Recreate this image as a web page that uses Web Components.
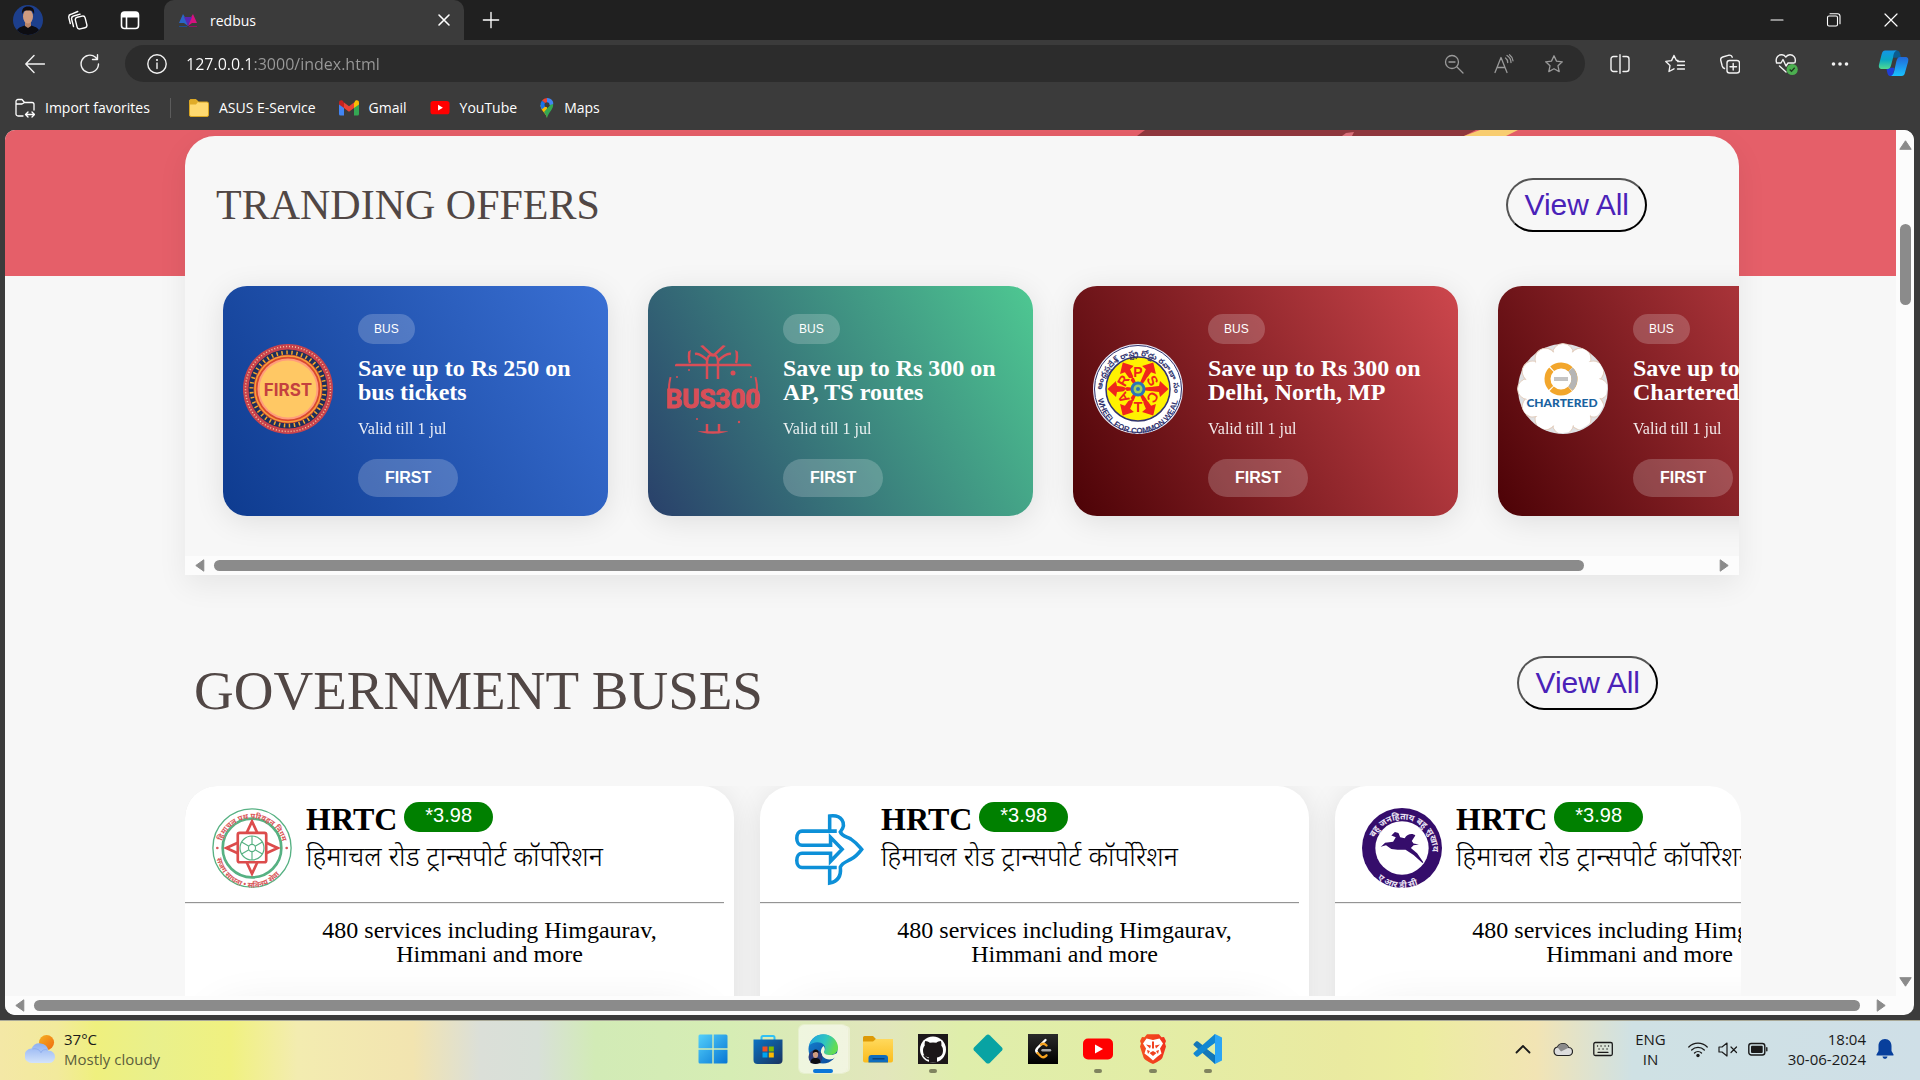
<!DOCTYPE html>
<html lang="en">
<head>
<meta charset="utf-8">
<title>redbus</title>
<style>
html,body{height:100%;margin:0}
body{overflow:hidden;background:#3b3b3b;font-family:"Liberation Serif",serif}
</style>
</head>
<body>
<desktop-screen></desktop-screen>
<script>
const define = (name, html, setup) => {
  const t = document.createElement('template');
  t.innerHTML = html;
  customElements.define(name, class extends HTMLElement {
    constructor() {
      super();
      this.attachShadow({mode: 'open'}).append(t.content.cloneNode(true));
    }
    connectedCallback() { if (setup) setup(this, this.shadowRoot); }
  });
};

/* ---------- line icons and app icons ---------- */
const line = (d, w = 1.4) => `<g fill="none" stroke="currentColor" stroke-width="${w}" stroke-linecap="round" stroke-linejoin="round">${d}</g>`;
const star = 'M10 1.8l2.5 5.3 5.8.7-4.3 4 1.2 5.8L10 14.700l-5.200 2.900 1.200-5.800-4.300-4 5.800-.7z';
const ICONS = {
  avatar: ['0 0 30 30', `<defs><clipPath id="c"><circle cx="15" cy="15" r="15"/></clipPath></defs><g clip-path="url(#c)"><rect width="30" height="30" fill="#1d3f8c"/><path d="M3 30c0-7 4-8 9-9.500h6c5 1.500 9 2.500 9 9.500z" fill="#0d0d12"/><path d="M12 17h6v4l-3 2-3-2z" fill="#b98569"/><ellipse cx="15" cy="11.500" rx="5" ry="7" fill="#cf9b80"/><path d="M9 9.500c-.5-6 2-8 6-8s7 2 6 8c-1-3-2-4-3-4h-5c-2 0-3 1-4 4z" fill="#120d0e"/></g>`],
  spaces: ['0 0 20 20', line('<rect x="8" y="6.500" width="10" height="12" rx="2.500" transform="rotate(-14 13 12)"/><path d="M5.500 16.500L3.700 9.500c-.4-1.700.4-3.100 1.900-3.500l6.500-1.900M2.300 13.500L.9 8c-.4-1.700.4-3.300 2-3.700L9.800 1.500"/>')],
  tabs: ['0 0 20 20', line('<rect x="1.500" y="2" width="17" height="16.500" rx="3"/><path d="M6.500 7v11"/>', 1.6) + '<path d="M1.500 7.500V5a3 3 0 013-3h11a3 3 0 013 3v2.500z" fill="currentColor"/>'],
  fav: ['0 0 20 16', '<path d="M1 11L5 2l3 5 2 7-4-3z" fill="#2a66c8"/><path d="M19 11l-4-9-3 5-2 7 4-3z" fill="#d6117f"/><path d="M6 5h8l-4 9z" fill="#5a26b0"/><path d="M1 14.500h8" stroke="#1e4c8e"/><path d="M11 14.500h8" stroke="#8d1462"/>'],
  x: ['0 0 20 20', line('<path d="M5 5l10 10M15 5L5 15"/>', 1.6)],
  close: ['0 0 20 20', line('<path d="M4 4l12 12M16 4L4 16"/>', 1.2)],
  plus: ['0 0 20 20', line('<path d="M10 1.500v17M1.500 10h17"/>', 1.5)],
  min: ['0 0 20 20', line('<path d="M4 10h12"/>', 1.1)],
  restore: ['0 0 20 20', line('<rect x="3.500" y="6" width="10" height="10" rx="1.500"/><path d="M6 3.700h7.500a2.500 2.500 0 012.500 2.500v7.500"/>', 1.1)],
  back: ['0 0 20 20', line('<path d="M19.500 10H.8M9 1.500L.8 10 9 18.500"/>')],
  reload: ['0 0 20 20', line('<path d="M18.500 10a8.700 8.700 0 11-3-6.700L17 5M17.500.8V5.500h-5"/>')],
  info: ['0 0 20 20', line('<circle cx="10" cy="10" r="9.200"/><path d="M10 9v5.500"/>') + '<circle cx="10" cy="6" r="1.100" fill="currentColor"/>'],
  zoomout: ['0 0 20 20', line('<circle cx="8" cy="8" r="6.500"/><path d="M13 13l6 6M5 8h6"/>', 1.3)],
  read: ['0 0 20 20', line('<path d="M1 18.500L7 3.500l6 15M3.200 13.500h7.700M11.500 4c1.500 1 2.200 2.700 2.200 4.500M13 1.500c2.500 1.500 4 4 4 7M15.500.8c2.200 1.700 3.300 3.500 3.500 6"/>', 1.3)],
  star: ['0 0 20 20', line(`<path d="${star}"/>`, 1.3)],
  split: ['0 0 20 20', line('<path d="M10 .8v18.400M7 2.500H3.500a2.500 2.500 0 00-2.500 2.500v10a2.500 2.500 0 002.500 2.500H7M13 2.500h3.500A2.500 2.500 0 0119 5v10a2.500 2.500 0 01-2.500 2.500H13"/>')],
  favs: ['0 0 20 20', line('<path d="M13 6.500l-1.700-.2L9 1.500 6.500 6.600.8 7.400 5 11.500 4 17.500l5-2.700M12.500 7.500h7M12.500 11.300h7M12.500 15h7"/>')],
  coll: ['0 0 20 20', line('<rect x="7" y="6.500" width="12.500" height="12.500" rx="2.500"/><path d="M13.200 9.500v6.500M10 12.700h6.500M4.500 14.500C3 14 2.500 13 2.200 12L.8 6.500C.4 4.800 1 3.500 2.700 3L9 1.200c1.700-.4 2.800.3 3.300 2"/>')],
  heart: ['0 0 23 23', line('<path d="M1.500 9.500C0 4 4 1.500 7 1.800c2 .2 3.200 1.300 3.800 2.300C11.500 3 13 2 14.800 1.800c3-.2 6.700 2.500 5.200 7.700M1.500 10H6l2-3.500 3 6.500 2-3h6M4.500 13l6.500 6"/>') + '<circle cx="17.200" cy="16.500" r="5.600" fill="#4caf50"/><path d="M14.700 16.500l1.800 1.800 3.200-3.600" fill="none" stroke="#1f3b20" stroke-width="1.300"/>'],
  dots: ['0 0 20 20', '<g fill="currentColor"><circle cx="3.500" cy="10" r="1.800"/><circle cx="10" cy="10" r="1.800"/><circle cx="16.500" cy="10" r="1.800"/></g>'],
  copilot: ['0 0 32 30', '<defs><linearGradient id="a" x1="0" y1="0" x2="0" y2="1"><stop offset="0" stop-color="#1496e8"/><stop offset=".5" stop-color="#0aa7c4"/><stop offset="1" stop-color="#52dc8e"/></linearGradient><linearGradient id="b" x1="0" y1="0" x2="0" y2="1"><stop offset="0" stop-color="#2167d8"/><stop offset="1" stop-color="#19c2ff"/></linearGradient></defs><path d="M16 1.500h3.500c2 0 3 1.500 3.500 4l.7 3.500H15z" fill="#0b5c8f"/><path d="M15.500 28h-2c-2.500 0-3.500-1-4-4L8.500 19.500H17z" fill="#1f3ed6"/><path d="M7.500 1.500H19.500C16.500 2.500 16.200 5 15.500 9L13.700 16c-.8 3-1.700 4.800-4.200 4.800H4.300c-3 0-4-2-3.200-5L3.600 6C4.400 2.800 5.300 1.500 7.500 1.500z" fill="url(#a)"/><path d="M24 28H13.500c2.200-1 2.800-3.500 3.400-6l2-9c.7-3 1.600-4.800 4.100-4.800h5c3 0 3.900 2 3.100 5L28.300 23c-.8 3.500-1.500 5-4.300 5z" fill="url(#b)"/>'],
  import: ['0 0 20 20', line('<path d="M8 18H3a2 2 0 01-2-2V3.500a2 2 0 012-2h4l2.500 3H17a2 2 0 012 2V12M1 6h6l2.500-1.500"/><path d="M11 16.500h8M13 14l-2.500 2.500L13 19M17 14l2.500 2.500L17 19"/>', 1.3)],
  folder: ['0 0 20 20', '<path d="M.5 3A1.500 1.500 0 012 1.500h5L9.500 4H18a1.500 1.500 0 011.500 1.500V17A1.500 1.500 0 0118 18.500H2A1.500 1.500 0 01.5 17z" fill="#ffd970" stroke="#d9a520"/><path d="M.5 3A1.500 1.500 0 012 1.500h5L9 4 7 6.500H.5z" fill="#e0ab28"/>'],
  gmail: ['0 0 20 16', '<path d="M0 3v11a1.500 1.500 0 001.500 1.500H5V7z" fill="#4285f4"/><path d="M20 3v11a1.500 1.500 0 01-1.500 1.500H15V7z" fill="#34a853"/><path d="M15 3v5l5-3.500V2.500c0-2-2.200-2.800-3.700-1.700z" fill="#fbbc04"/><path d="M5 8V2.500l5 3.800 5-3.800V8l-5 3.800z" fill="#ea4335"/><path d="M0 2.500v2L5 8V2.500L3.700.8C2.200-.3 0 .5 0 2.500z" fill="#c5221f"/>'],
  yt: ['0 0 30 22', '<rect width="30" height="21" rx="4.500" fill="#f00"/><path d="M12 6l7.500 4.500L12 15z" fill="#fff"/>'],
  pin: ['0 0 14 20', '<path d="M7 20c0-4-6.500-7-6.500-13H7z" fill="#fbbc04"/><path d="M7 0a6.700 6.700 0 00-5 2.500L7 7z" fill="#ea4335"/><path d="M2 2.500A7 7 0 00.5 8c.3 1.500 1 2.500 1.500 3.300L7 7z" fill="#1a73e8"/><path d="M7 0c5 0 7 4 6 7L7 7z" fill="#4285f4"/><path d="M13 6c1 5-4.500 8-6 14-.5-2-1.500-4-3-6l6-7z" fill="#34a853"/><circle cx="7" cy="6.700" r="2.500" fill="#3b3b3b"/>'],
  weather: ['0 0 32 32', '<defs><linearGradient id="s" x1="0" y1="0" x2="1" y2="1"><stop stop-color="#f5b021"/><stop offset="1" stop-color="#ef6a10"/></linearGradient><linearGradient id="w" x1="0" y1="0" x2="0" y2="1"><stop stop-color="#8eb0f2"/><stop offset="1" stop-color="#d3e3fb"/></linearGradient></defs><circle cx="23" cy="9" r="8" fill="url(#s)"/><path d="M7.500 31A7.500 7.500 0 017 15.500 9.500 9.500 0 0125 18a6.500 6.500 0 011 13z" fill="url(#w)"/><path d="M8 16c4-1 8 1 9 4 1-3 4-4 7-3" fill="none" stroke="#7d9fe8" opacity=".6"/>'],
  start: ['0 0 30 30', '<defs><linearGradient id="g" x1="0" y1="0" x2="1" y2="1"><stop stop-color="#54d0fb"/><stop offset="1" stop-color="#0676d4"/></linearGradient></defs><path d="M.5 2A1.500 1.500 0 012 .5h12.300v13.800H.5zM15.700.5H28A1.500 1.500 0 0129.500 2v12.300H15.700zM.5 15.700h13.800v13.800H2A1.500 1.500 0 01.5 28zM15.700 15.700h13.800V28a1.500 1.500 0 01-1.500 1.500H15.700z" fill="url(#g)"/>'],
  store: ['0 0 30 30', '<defs><linearGradient id="g" x1="0" y1="0" x2="1" y2="1"><stop stop-color="#0a74c4"/><stop offset="1" stop-color="#1a335e"/></linearGradient></defs><path d="M8.500 7V3.500a1.500 1.500 0 011.500-1.500h10a1.500 1.500 0 011.500 1.500V7" fill="none" stroke="#30c0f4" stroke-width="2"/><path d="M.5 5.500h29V26a4 4 0 01-4 4h-21a4 4 0 01-4-4z" fill="url(#g)"/><path d="M9.500 12.500h5v5h-5z" fill="#f25022"/><path d="M15.800 12.500h5v5h-5z" fill="#7fba00"/><path d="M9.500 18.500h5v5h-5z" fill="#00a4ef"/><path d="M15.800 18.500h5v5h-5z" fill="#ffb900"/>'],
  edge: ['0 0 30 30', '<defs><linearGradient id="g" x1="0" y1="0" x2="1" y2=".3"><stop stop-color="#1fa0e4"/><stop offset=".6" stop-color="#2fc6c0"/><stop offset="1" stop-color="#62dc52"/></linearGradient><linearGradient id="h" x1="0" y1="0" x2="1" y2="1"><stop stop-color="#1482d2"/><stop offset="1" stop-color="#0c4796"/></linearGradient></defs><circle cx="15" cy="15" r="14.500" fill="url(#h)"/><path d="M1 12C3 4 9 .3 15.500.3 24 .3 30 7 30 13.500c0 5-4 7.500-8 7.500-5 0-6.500-2-6-3 1.500-2 2-5-.5-7.500C12 7 4 8 1 12z" fill="url(#g)"/><path d="M15.700 12c-3 2-4 7-1 10.500 3.500 4 9.500 3.500 12.500 1 1-.7 1.500.2 1 .8l2-1V18c-2 2-5 3-8 3-4 0-6.500-1.500-6.200-3 1.200-2 1-4-.3-6z" fill="#f0f6dc"/><circle cx="7.500" cy="23" r="7" fill="#2b3a7c"/><path d="M2.500 29c0-4 2-5 5-5s5 1 5 5l-5 1z" fill="#0d0d12"/><ellipse cx="7.500" cy="20.500" rx="2.600" ry="3.500" fill="#cf9b80"/><path d="M4.700 19.500c0-3 1-4 3-4s3 1 2.800 4c-1-2-4-2-5.800 0z" fill="#120d0e"/>'],
  files: ['0 0 30 30', '<defs><linearGradient id="g" x1="0" y1="0" x2="0" y2="1"><stop stop-color="#ffd95c"/><stop offset="1" stop-color="#fbbc1d"/></linearGradient></defs><path d="M0 3.500A1.500 1.500 0 011.500 2H10l3 3-2 4H0z" fill="#dd9a06"/><path d="M0 7.500h10L13 5h17v21.500a2 2 0 01-2 2H2a2 2 0 01-2-2z" fill="url(#g)"/><path d="M5.500 28.500V24a3 3 0 013-3h13.500a3 3 0 013 3v4.500z" fill="#0f6cbd"/><path d="M9.500 24.800h12" stroke="#083f78" stroke-width="1.400"/>'],
  github: ['0 0 30 30', '<rect width="30" height="30" fill="#1c1719"/><circle cx="15" cy="15.500" r="13" fill="#fff"/><path d="M11 28.500v-5c-3.500-.5-6-2.500-6-7 0-2 .7-3.700 1.800-5-.3-1.500-.2-3.200.5-4.500 1.700 0 3.200.8 4.500 1.800a13 13 0 016.500 0c1.300-1 2.800-1.800 4.500-1.800.7 1.300.8 3 .5 4.500a7.500 7.500 0 011.700 5c0 4.500-2.500 6.500-6 7v5z" fill="#1c1719"/><path d="M5.500 21.500c2 .5 2 3.500 5.500 3.500" fill="none" stroke="#1c1719" stroke-width="1.600"/>'],
  diamond: ['0 0 30 30', '<path d="M13 1.500a3 3 0 014 0L29 13.500a2.500 2.500 0 010 3L17 28.700a3 3 0 01-4 0L1 16.500a2.500 2.500 0 010-3z" fill="#08a3a3"/>'],
  leet: ['0 0 30 30', '<defs><linearGradient id="g" x1="0" y1="0" x2="0" y2="1"><stop stop-color="#2a2a2a"/><stop offset="1" stop-color="#000"/></linearGradient></defs><rect width="30" height="30" fill="url(#g)"/><g fill="none" stroke-width="2.400" stroke-linecap="round"><path d="M17.500 6l-8 8c-1.500 1.500-1.500 3.500 0 5" stroke="#fff"/><path d="M13 10.500c2-1.500 3.500-1 5.500 1M9.500 19l3 3c1.500 1.500 3.500 1.500 5 .3l1-1" stroke="#f6a11e"/><path d="M14.500 16.300H22" stroke="#a8a8a8"/></g>'],
  ytb: ['0 0 30 30', '<rect y="4.500" width="30" height="21" rx="5" fill="#f00"/><path d="M12 10.500l8 4.500-8 4.500z" fill="#fff"/>'],
  brave: ['0 0 30 30', '<defs><linearGradient id="g" x1="0" y1="0" x2="1" y2="0"><stop stop-color="#f4511f"/><stop offset="1" stop-color="#f0321d"/></linearGradient></defs><path d="M9 .3h12l2.500 3 2.500-.3 2 4-1 2.500 1 3-3.500 11c-.5 1.500-3 3.500-9.500 6.500-6.500-3-9-5-9.500-6.500L2 12.500l1-3L2 7l2-4 2.500.3z" fill="url(#g)"/><path d="M8.500 4.500L15 6l6.500-1.500 3.500 5-3 5 1.500 5-4 3L15 26.500 10.500 22.500l-4-3 1.500-5-3-5z" fill="#fff"/><path d="M8 10.500l5 1-1 3zM22 10.500l-5 1 1 3zM11.500 19l3.500-2 3.500 2-3.500 3zM14 7.500h2v7h-2zM9 16l3 1-2 3zM21 16l-3 1 2 3z" fill="#f0421f"/>'],
  code: ['0 0 30 30', '<path d="M22 0l7 3.500v23L22 30l-1.500-2V3z" fill="#2ba5f5"/><path d="M22 0v30L1 11.500c-.7-.6-.7-1.500 0-2.100L3 7.600c.6-.5 1.300-.5 2 0L22 21z" fill="#0871b8" opacity=".95"/><path d="M22 0v9L5 22.400c-.7.500-1.400.5-2 0l-2-1.800c-.7-.6-.7-1.500 0-2.100z" fill="#1187d2"/><path d="M22 9v12l-8-6z" fill="#dfeea8"/>'],
  up: ['0 0 20 20', line('<path d="M3.500 13.500L10 7l6.500 6.500"/>', 1.8)],
  cloud: ['0 0 20 20', '<path d="M5 16.500A4.300 4.300 0 014.500 8 6 6 0 0115.500 8.500 4 4 0 0115.500 16.500z" fill="#ddd" stroke="#222" stroke-width="1.200"/><path d="M4.500 8.200A6 6 0 0115.500 8.700L8 12.500z" fill="#8a8a8a"/>'],
  keyb: ['0 0 20 20', line('<rect x=".8" y="3.500" width="18.500" height="13" rx="1.500"/><path d="M4.500 7h.1M8 7h.1M12 7h.1M15.500 7h.1M6 10h.1M10 10h.1M14 10h.1M5 13.300h10"/>', 1.3)],
  wifi: ['0 0 20 20', line('<path d="M.8 8a13 13 0 0118.400 0M3.700 11a9 9 0 0112.600 0M6.500 14a5 5 0 017 0"/>', 1.3) + '<circle cx="10" cy="16.500" r="1.700" fill="currentColor"/>'],
  mute: ['0 0 20 20', line('<path d="M1 8v5h3l5 4V4L4 8zM13 8l5.500 5.500M18.500 8L13 13.500"/>', 1.2)],
  batt: ['0 0 20 20', line('<rect x=".8" y="4.500" width="16" height="11.500" rx="2.500"/><path d="M18.800 8.800v3"/>', 1.4) + '<rect x="3" y="6.700" width="11.700" height="7.200" rx="1" fill="currentColor"/>'],
  bell: ['0 0 20 20', '<path d="M10 0c4 0 6.500 3 6.500 7v5l2 3.500c.2.500 0 1-.5 1H2c-.5 0-.7-.5-.5-1l2-3.500V7c0-4 2.500-7 6.500-7zM7.500 17.500h5c-.3 1.500-1.300 2.300-2.500 2.300s-2.200-.8-2.500-2.300z" fill="#083f9c"/>']
};
define('ui-icon', `<style>:host{display:inline-flex;width:20px;height:20px;flex:none}svg{width:100%;height:100%;display:block}</style>`,
  (el, r) => { const [vb, body] = ICONS[el.getAttribute('name')]; r.innerHTML += `<svg viewBox="${vb}" aria-hidden="true">${body}</svg>`; });

/* ---------- round emblems ---------- */
const ring = (n, f) => Array.from({length: n}, (_, i) => f(i * 360 / n)).join('');
const EMBLEMS = {
  first: `<circle cx="45" cy="45" r="45" fill="#c9434c"/><circle cx="45" cy="45" r="42.500" fill="none" stroke="#f3c9a0" stroke-width="1.500" stroke-dasharray="1 2"/><circle cx="45" cy="45" r="39.500" fill="#1d2f5c"/><circle cx="45" cy="45" r="36.500" fill="none" stroke="#f0a52e" stroke-width="4" stroke-dasharray="1.500 3.500"/><circle cx="45" cy="45" r="34.500" fill="#d9482f"/><circle cx="45" cy="45" r="33" fill="none" stroke="#f7a13b" stroke-width="1.500"/><circle cx="45" cy="45" r="30.500" fill="#ff9d7c"/><circle cx="45" cy="45" r="28.500" fill="#ffc864"/><text x="45" y="52" text-anchor="middle" font-family="Inter,sans-serif" font-weight="700" font-size="17" fill="#c4413f">FIRST</text>`,
  bus300: `<defs><clipPath id="k"><circle cx="45" cy="45" r="45"/></clipPath></defs><g clip-path="url(#k)" fill="none" stroke="#d94e57" stroke-width="2.500"><path d="M7 21h77M39 35V18c0-10 11-10 11 0v17M45 12L32 0M45 12L58 0M40 17c-5-5-9-8-13-7M50 17c5-5 9-8 13-7M22 19c-2-5-1-10 0-15M68 19c2-5 1-10 0-15M39 80v12M51 80v12M30 88.500h30" /><path d="M2 33c-2 8-2 17 0 26M88 33c2 8 2 17 0 26" stroke-width="3"/></g><circle cx="65" cy="29" r="2.500" fill="#d94e57"/><circle cx="9" cy="33" r="1" fill="#d94e57"/><circle cx="83" cy="33" r="1" fill="#d94e57"/><circle cx="21" cy="26" r="1" fill="#d94e57"/><circle cx="29" cy="75" r="1" fill="#d94e57"/><circle cx="71" cy="78" r="1.200" fill="#d94e57"/><text x="45" y="64" text-anchor="middle" font-family="Roboto,sans-serif" font-weight="700" font-size="26" fill="#d94e57" stroke="#d94e57" stroke-width="1">BUS300</text>`,
  apsrtc: `<defs><path id="t" d="M45 45m-36 3a36 36 0 1172 0"/><path id="u" d="M45 45m-40.500 4a40.500 40.500 0 0081 0"/></defs><circle cx="45" cy="45" r="45" fill="#e8e8f4"/><circle cx="45" cy="45" r="43.500" fill="#fff" stroke="#31346f"/><circle cx="45" cy="45" r="32" fill="#fff200" stroke="#31346f" stroke-width="1.500"/><text font-family="'Noto Sans Telugu','Noto Sans',sans-serif" font-weight="700" font-size="8" fill="#31346f"><textPath href="#t" startOffset="2">ఆంధ్రప్రదేశ్ రాష్ట్ర రోడ్డు రవాణా సంస్థ</textPath></text><text font-family="'Liberation Sans',sans-serif" font-weight="700" font-size="8" fill="#31346f"><textPath href="#u" startOffset="6">WHEEL FOR COMMON WEAL</textPath></text>${ring(6, a => `<path transform="rotate(${a + 30} 45 45)" d="M43.500 38l-1.500-14-5-1L45 14.500 53 23l-5 1L46.500 38z" fill="#f0251c"/>`)}<g font-family="'Liberation Sans',sans-serif" font-weight="700" font-size="14" fill="#f0251c" text-anchor="middle">${[...'PSCTAR'].map((c, i) => `<text x="45" y="${i === 3 ? 68 : 33}" stroke="#fff200" stroke-width="2" paint-order="stroke" transform="rotate(${i === 3 ? 0 : i * 60} 45 45)">${c}</text>`).join('')}</g><circle cx="45" cy="45" r="7.500" fill="#2a74b8"/><circle cx="45" cy="45" r="4.500" fill="#9fd05a"/><circle cx="45" cy="45" r="2" fill="#2a74b8"/>`,
  chartered: `<circle cx="45" cy="45" r="45" fill="#dfe1e4"/><g clip-path="circle(45px at 45px 45px)">${ring(12, a => `<circle cx="45" cy="10" r="10.500" fill="#fff" stroke="#e2cdbd" transform="rotate(${a} 45 45)"/>`)}</g><circle cx="45" cy="45" r="38" fill="#fff"/><g fill="none" stroke-width="6"><circle cx="43" cy="35" r="13.500" stroke="#f2a62c" stroke-dasharray="20 1.200" transform="rotate(48 43 35)"/><path d="M52.500 25.500a13.500 13.500 0 010 19" stroke="#b5b5b5"/></g><path d="M36 35h14" stroke="#c4c4c4" stroke-width="4"/><text x="44" y="63" text-anchor="middle" font-family="Lato,sans-serif" font-weight="900" font-size="12" fill="#1a62a0">CHARTERED</text>`,
  hrtc: `<defs><path id="t" d="M45 45m-35 2a35 35 0 1170 0"/><path id="u" d="M45 45m-40.500 4a40.500 40.500 0 0081 0"/></defs><circle cx="45" cy="45" r="44" fill="#fff" stroke="#57b183" stroke-width="1.500"/><circle cx="45" cy="45" r="33" fill="none" stroke="#57b183" stroke-width="3"/><g font-family="'Noto Sans Devanagari','Noto Sans',sans-serif" font-weight="700" font-size="8.500" fill="#d9585a"><text><textPath href="#t" startOffset="10">हिमाचल पथ परिवहन निगम</textPath></text><text><textPath href="#u" startOffset="8">सजग साधना • सविनय सेवा</textPath></text></g><g fill="none" stroke="#dc4c4c" stroke-width="3"><rect x="29" y="28" width="32" height="33" rx="2"/><path d="M39 28l6-13 6 13M39 61l6 13 6-13M29 39l-13 6 13 6M61 39l13 6-13 6"/></g><g fill="none" stroke="#57b183" stroke-width="1.300"><circle cx="45" cy="45" r="13.500"/><circle cx="45" cy="45" r="4"/>${ring(6, a => `<path d="M45 41V31.500" transform="rotate(${a} 45 45)"/>`)}</g><circle cx="6" cy="45" r="1.500" fill="#d9585a"/><circle cx="84" cy="45" r="1.500" fill="#d9585a"/>`,
  arrows: `<g fill="none" stroke="#0d90d8" stroke-width="4"><path d="M56 26H17c-8 0-8 16 0 16h32V33L62 46.500 49 60V51H17c-8 0-8 16 0 16h39"/><path d="M48 26V9c13-2 20 8 12 18 2 5 7 5 12 8 6 4 9 8 12 11.500-3 4-6 8-12 11-5 3-10 4-12 9 1 9-2 16-12 18V67"/></g>`,
  horse: `<defs><path id="t" d="M45 45m-34 2a34 34 0 1168 0"/><path id="u" d="M45 45m-41 4a41 41 0 0082 0"/></defs><circle cx="45" cy="45" r="45" fill="#350d6b"/><circle cx="45" cy="45" r="30" fill="#fff"/><g font-family="'Noto Sans Devanagari','Noto Sans',sans-serif" font-weight="700" font-size="10" fill="#e9e2f2"><text><textPath href="#t" startOffset="14">बहु जनहिताय बहु सुखाय</textPath></text><text><textPath href="#u" startOffset="34">ए आर डी सी</textPath></text></g><path d="M21 44l5-5 9-1 3-5-5-2 4-4 4 1 2 5 5 1c3-5 9-6 12-3l-4 6 2 3 6 1-6 1-3 3 7 6 7 10-1 1-10-9-9-6-9 0-7-1-6-4-4 1z" fill="#350d6b"/>`
};
define('round-emblem', `<style>:host{display:block;width:90px;height:90px;flex:none}svg{width:100%;height:100%;display:block;overflow:visible}</style>`,
  (el, r) => { r.innerHTML += `<svg viewBox="0 0 90 90" role="img" aria-label="${el.getAttribute('name')}">${EMBLEMS[el.getAttribute('name')]}</svg>`; });

/* ---------- scrollbar: arrows and a thumb between two flexible spaces ---------- */
define('scroll-bar', `<style>
:host{display:flex;align-items:center;height:19px;padding:0 10px;gap:9px;background:#fcfcfc;box-sizing:border-box;flex:none}
:host([vertical]){flex-direction:column;width:18px;height:auto;padding:10px 0 9px}
.track{flex:1;display:flex;align-self:stretch;align-items:center}
:host([vertical]) .track{flex-direction:column}
.thumb{height:11px;border-radius:6px;background:#8b8b8b}
:host([vertical]) .thumb{width:11px;height:auto}
svg{width:10px;height:13px;flex:none}
:host([vertical]) svg{width:13px;height:10px}
path{fill:#8b8b8b;stroke:#8b8b8b;stroke-linejoin:round}
</style><svg class="s"></svg><div class="track"><i></i><div class="thumb"></div><i></i></div><svg class="e"></svg>`,
  (el, r) => {
    const v = el.hasAttribute('vertical'), parts = el.getAttribute('parts').split(' ');
    const kids = r.querySelector('.track').children;
    parts.forEach((n, i) => kids[i].style.flex = n + ' 0 0');
    const put = (s, box, d) => { const g = r.querySelector(s); g.setAttribute('viewBox', box); g.innerHTML = `<path d="${d}"/>`; };
    if (v) { put('.s', '0 0 13 10', 'M6.500 .8l5.700 8.500H.8z'); put('.e', '0 0 13 10', 'M6.500 9.200L12.200.7H.8z'); }
    else { put('.s', '0 0 10 13', 'M.8 6.500l8-5.700v11.400z'); put('.e', '0 0 10 13', 'M9.200 6.500l-8-5.700v11.400z'); }
  });

/* ---------- browser chrome ---------- */
define('icon-button', `<style>
:host{display:inline-flex;flex:none}
button{all:unset;display:flex;align-items:center;justify-content:center;width:100%}
</style><button><slot></slot></button>`, (el, r) => r.querySelector('button').setAttribute('aria-label', el.getAttribute('label')));

define('tab-strip', `<style>
:host{display:flex;height:40px;background:#202020;color:#fff;align-items:stretch;font:14px "Open Sans",sans-serif}
.left{display:flex;align-items:center;justify-content:space-between;width:164px;padding:0 24px 0 13px;box-sizing:border-box}
.left icon-button:first-child ui-icon{width:30px;height:30px}
.left icon-button:nth-child(2){margin-right:8px}
.tab{display:flex;align-items:center;width:300px;box-sizing:border-box;padding:0 10px 0 14px;background:#3b3b3b;border-radius:10px 10px 0 0;gap:12px}
.tab span{flex:1}
.tab ui-icon[name=fav]{height:16px}
.new{padding-left:18px}
.new ui-icon{width:18px}
.win{display:flex;margin-left:auto;gap:37px;padding-right:19px;align-items:center}
</style>
<div class="left"><icon-button label="Profile"><ui-icon name="avatar"></ui-icon></icon-button><icon-button label="Workspaces"><ui-icon name="spaces"></ui-icon></icon-button><icon-button label="Tab actions"><ui-icon name="tabs"></ui-icon></icon-button></div>
<div class="tab"><ui-icon name="fav"></ui-icon><span>redbus</span><icon-button label="Close tab"><ui-icon name="x"></ui-icon></icon-button></div>
<icon-button class="new" label="New tab"><ui-icon name="plus"></ui-icon></icon-button>
<div class="win"><icon-button label="Minimize"><ui-icon name="min"></ui-icon></icon-button><icon-button label="Restore"><ui-icon name="restore"></ui-icon></icon-button><icon-button label="Close"><ui-icon name="close"></ui-icon></icon-button></div>`);

define('tool-bar', `<style>
:host{display:flex;align-items:center;height:47px;padding:0 11px 0 25px;color:#f2f2f2}
.nav{display:flex;gap:35px;width:100px}
.pill{flex:1;display:flex;align-items:center;height:37px;border-radius:19px;background:#2c2c2c;padding:0 21px 0 22px}
input{flex:1;min-width:0;border:0;outline:0;margin-left:19px;padding:0;font:16px "Open Sans",sans-serif;height:30px;
background:linear-gradient(90deg,#fff 68px,#9a9a9a 68px);-webkit-background-clip:text;background-clip:text;-webkit-text-fill-color:transparent;color:#fff}
.in{display:flex;gap:30px;color:#9a9a9a}
.out{display:flex;align-items:center;gap:35px;padding-left:25px}
ui-icon[name=heart]{width:23px;height:23px;margin:2px -3px 0 0}
ui-icon[name=copilot]{width:31px;height:29px}
.out icon-button:last-child{margin-left:-7px}
</style>
<div class="nav"><icon-button label="Back"><ui-icon name="back"></ui-icon></icon-button><icon-button label="Refresh"><ui-icon name="reload"></ui-icon></icon-button></div>
<div class="pill"><icon-button label="Site information"><ui-icon name="info"></ui-icon></icon-button><input aria-label="Address" value="127.0.0.1:3000/index.html"><div class="in"><icon-button label="Zoom"><ui-icon name="zoomout"></ui-icon></icon-button><icon-button label="Read aloud"><ui-icon name="read"></ui-icon></icon-button><icon-button label="Add to favorites"><ui-icon name="star"></ui-icon></icon-button></div></div>
<div class="out"><icon-button label="Split screen"><ui-icon name="split"></ui-icon></icon-button><icon-button label="Favorites"><ui-icon name="favs"></ui-icon></icon-button><icon-button label="Collections"><ui-icon name="coll"></ui-icon></icon-button><icon-button label="Browser essentials"><ui-icon name="heart"></ui-icon></icon-button><icon-button label="Settings"><ui-icon name="dots"></ui-icon></icon-button><icon-button label="Copilot"><ui-icon name="copilot"></ui-icon></icon-button></div>`);

define('bookmark-bar', `<style>
:host{display:flex;align-items:center;height:41px;padding:0 0 2px 15px;font:14px "Open Sans",sans-serif;gap:23px}
a{display:flex;align-items:center;gap:10px;color:#fff;text-decoration:none}
hr{width:1px;height:20px;margin:0 -5px 0 -3px;border:0;background:#5c5c5c}
ui-icon[name=yt]{height:14px}
ui-icon[name=gmail]{height:16px}
ui-icon[name=pin]{width:14px}
</style>
<a href="#import"><ui-icon name="import"></ui-icon>Import favorites</a><hr>
<a href="#asus"><ui-icon name="folder"></ui-icon>ASUS E-Service</a>
<a href="#gmail"><ui-icon name="gmail"></ui-icon>Gmail</a>
<a href="#youtube"><ui-icon name="yt"></ui-icon>YouTube</a>
<a href="#maps"><ui-icon name="pin"></ui-icon>Maps</a>`);

/* ---------- page content ---------- */
define('view-all', `<style>
:host{display:block;flex:none}
button{box-sizing:border-box;height:54px;padding:0 16px;border:2px outset #000;border-radius:27px;background:none;font:30px/48px "Liberation Sans",sans-serif;color:#4a22b8}
</style><button><slot></slot></button>`);

define('offer-card', `<style>
:host{display:flex;align-items:flex-start;gap:25px;flex:none;width:385px;height:230px;box-sizing:border-box;padding:28px 20px 0;border-radius:24px;color:#fff;box-shadow:0 5px 30px rgba(0,0,0,.1)}
:host([tone=blue]){background:linear-gradient(60deg,#0e3b8f,#3a70d4)}
:host([tone=green]){background:linear-gradient(60deg,#29406a,#4ec892)}
:host([tone=red]){background:linear-gradient(60deg,#4c0206,#cd474d)}
.emblem{margin-top:30px}
.text{flex:1}
.tag{display:flex;align-items:center;width:max-content;height:30px;padding:0 16px;border-radius:15px;background:rgba(255,255,255,.2);font:12px "Liberation Sans",sans-serif}
h3{margin:12px 0 16px;font-size:24px;line-height:24px;font-weight:700}
p{margin:0 0 21px;font-size:16px;line-height:18px;opacity:.9}
button{height:38px;padding:0 27px;border:0;border-radius:19px;background:rgba(255,255,255,.2);color:#fff;font:700 16px "Liberation Sans",sans-serif;display:block}
</style>
<div class="emblem"><slot name="emblem"></slot></div>
<div class="text"><span class="tag">BUS</span><h3><slot></slot></h3><p>Valid till 1 jul</p><button>FIRST</button></div>`);

define('offer-section', `<style>
:host{display:block;margin:0 157px 0 180px;background:#f7f7f7;border-radius:30px 30px 0 0;box-shadow:0 10px 30px rgba(0,0,0,.07)}
header{display:flex;align-items:center;justify-content:space-between;padding:42px 92px 0 31px}
h2{margin:0;font-size:42px;font-weight:400;line-height:48px;color:#514745}
.row{display:flex;gap:40px;padding:54px 0 40px 38px;overflow:hidden}
</style>
<header><h2>TRANDING OFFERS</h2><view-all>View All</view-all></header>
<div class="row">
<offer-card tone="blue"><round-emblem slot="emblem" name="first"></round-emblem>Save up to Rs 250 on bus tickets</offer-card>
<offer-card tone="green"><round-emblem slot="emblem" name="bus300"></round-emblem>Save up to Rs 300 on AP, TS routes</offer-card>
<offer-card tone="red"><round-emblem slot="emblem" name="apsrtc"></round-emblem>Save up to Rs 300 on Delhi, North, MP</offer-card>
<offer-card tone="red"><round-emblem slot="emblem" name="chartered"></round-emblem>Save up to Rs 300 on Chartered Bus</offer-card>
</div><scroll-bar parts="0 1369 126"></scroll-bar>`);

define('operator-card', `<style>
:host{display:block;flex:none;width:549px;height:400px;background:#fff;border-radius:32px;box-shadow:0 5px 30px rgba(0,0,0,.1);color:#000}
.top{display:flex;gap:14px;height:94px;padding:22px 0 0 27px}
.id{margin-top:-6px;flex:1}
.name{display:flex;gap:7px;align-items:flex-start}
h3{margin:0;font-size:32px;line-height:34px}
.rate{height:30px;padding:0 21px;border-radius:15px;background:#008000;color:#fff;font:20px/27px "Liberation Sans",sans-serif}
.local{margin:0;font:300 27px/48px "Noto Sans Devanagari","Noto Sans",sans-serif;white-space:nowrap}
hr{margin:0 10px 0 0;border:solid;border-width:1px 0;border-color:#949494 transparent #ededed}
.about{margin:14px 45px 0 105px;font-size:24px;line-height:24px;text-align:center}
.more{margin:48px 30px 0;height:120px;border-radius:30px;box-shadow:0 0 50px rgba(0,0,0,.12)}
</style>
<div class="top"><slot name="emblem"></slot><div class="id"><div class="name"><h3>HRTC</h3><span class="rate">*3.98</span></div><p class="local">हिमाचल रोड ट्रान्सपोर्ट कॉर्पोरेशन</p></div></div>
<hr><p class="about">480 services including Himgaurav, Himmani and more</p><div class="more"></div>`);

define('operator-section', `<style>
:host{display:block;margin:81px 155px 0 180px}
header{display:flex;align-items:flex-start;justify-content:space-between;padding:0 83px 61px 9px}
h2{margin:0;font-size:55px;font-weight:400;line-height:69px;color:#514745}
.row{display:flex;gap:26px;border-radius:32px 32px 0 0;overflow:hidden}
round-emblem{width:80px;height:80px}
</style>
<header><h2>GOVERNMENT BUSES</h2><view-all>View All</view-all></header>
<div class="row"><operator-card><round-emblem slot="emblem" name="hrtc"></round-emblem></operator-card><operator-card><round-emblem slot="emblem" name="arrows"></round-emblem></operator-card><operator-card><round-emblem slot="emblem" name="horse"></round-emblem></operator-card></div>`);

define('web-page', `<style>
:host{display:grid;grid-template:minmax(0,1fr) 19px / minmax(0,1fr) 18px;flex:1;min-height:0;margin:0 6px 5px 5px;border-radius:10px;overflow:hidden;background:#fcfcfc}
.view{overflow:hidden;background:linear-gradient(#e55f69 146px,#f7f7f7 146px)}
.banner{display:block;width:100%;height:6px}
</style>
<div class="view">
<svg class="banner" viewBox="0 0 1891 6" preserveAspectRatio="none"><path d="M1132 6l8-6h331l-12 6z" fill="#8f373d"/><path d="M1337 6l4-3 8-1-2 4z" fill="#d9707a"/><path d="M1459 6l16-6h38l-12 6z" fill="#f8cd70"/></svg>
<offer-section></offer-section><operator-section></operator-section></div>
<scroll-bar vertical parts="66 82 670"></scroll-bar>
<scroll-bar parts="0 1826 7"></scroll-bar>`);

/* ---------- taskbar ---------- */
define('task-bar', `<style>
:host{display:grid;grid-template-columns:1fr auto 1fr;align-items:center;height:56px;padding-bottom:3px;border-top:1px solid #a9a998;flex:none;color:#1a1a1a;font:15px/20px "Open Sans",sans-serif;
background:linear-gradient(90deg,#f4e8a6 0,#f2ea9c 3%,#eff07e 5%,#e9f08c 8%,#f0f180 12%,#f3ecb0 15.500%,#f2e4b0 21.500%,#dbdfd8 25%,#d8e0d8 28%,#d2ebb6 31%,#d6edb4 38%,#e2e6bc 46%,#dfeeab 50%,#e3eda6 60%,#eaeaa0 70%,#ecedA0 74%,#f2e4b4 80%,#cfe1e4 85%,#cfdfe7 100%)}
.weather{display:flex;gap:9px;align-items:center;padding-left:25px}
.weather ui-icon{width:30px;height:30px}
.weather span{display:block;color:#5c5e3c}
.apps{display:flex;gap:7px}
.apps icon-button{width:48px;height:48px;border-radius:5px;flex-direction:column;align-items:center;justify-content:flex-end}
.apps icon-button::after{content:"";width:8px;height:4px;border-radius:2px;margin-top:5px;background:none}
.apps icon-button.run::after{background:#80845f}
.apps icon-button.on{background:rgba(255,255,255,.55);box-shadow:0 0 0 1px rgba(255,255,255,.3),4px 0 0 -1px rgba(255,255,255,.4)}
.apps icon-button.on::after{width:20px;background:#0a76d8}
.apps ui-icon{width:30px;height:30px}
.tray{display:flex;justify-content:flex-end;align-items:center;padding-right:25px}
.tray>icon-button{margin-right:20px}
.lang{text-align:center;margin:0 22px 0 2px}
.net{display:flex;gap:10px;margin-right:20px}
time{text-align:right;margin-right:9px}
.tray icon-button:last-child{margin:0}
</style>
<div class="weather"><ui-icon name="weather"></ui-icon><div>37°C<span>Mostly cloudy</span></div></div>
<div class="apps"></div>
<div class="tray"><icon-button label="Hidden icons"><ui-icon name="up"></ui-icon></icon-button><icon-button label="OneDrive"><ui-icon name="cloud"></ui-icon></icon-button><icon-button label="Keyboard"><ui-icon name="keyb"></ui-icon></icon-button><div class="lang">ENG<br>IN</div><div class="net"><ui-icon name="wifi"></ui-icon><ui-icon name="mute"></ui-icon><ui-icon name="batt"></ui-icon></div><time>18:04<br>30-06-2024</time><icon-button label="Notifications"><ui-icon name="bell"></ui-icon></icon-button></div>`,
  (el, r) => {
    r.querySelector('.apps').innerHTML = [['start', 'Start'], ['store', 'Store'], ['edge', 'Edge', 'on'], ['files', 'File Explorer'], ['github', 'GitHub', 'run'], ['diamond', 'App'], ['leet', 'LeetCode'], ['ytb', 'YouTube', 'run'], ['brave', 'Brave', 'run'], ['code', 'VS Code', 'run']]
      .map(([n, l, c = '']) => `<icon-button class="${c}" label="${l}"><ui-icon name="${n}"></ui-icon></icon-button>`).join('');
  });

define('desktop-screen', `<style>
:host{display:flex;flex-direction:column;height:100vh;background:#3b3b3b}
</style><tab-strip></tab-strip><tool-bar></tool-bar><bookmark-bar></bookmark-bar><web-page></web-page><task-bar></task-bar>`);
</script>
</body>
</html>
